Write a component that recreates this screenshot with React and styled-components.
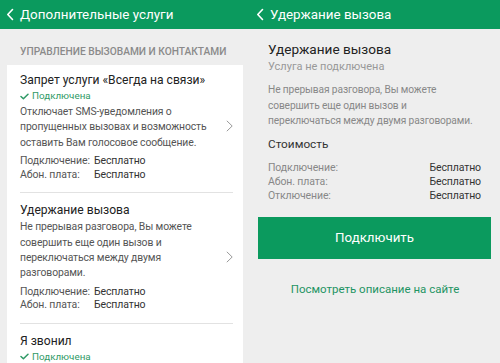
import React from "react";
import styled, { createGlobalStyle } from "styled-components";

const GREEN = "#0b9a5e";

const Global = createGlobalStyle`
  html, body { margin: 0; padding: 0; background: #eeeeee; }
  body { font-family: Roboto, "Liberation Sans", sans-serif; }
`;

const Screen = styled.div`
  display: flex;
  width: 500px;
  height: 363px;
  overflow: hidden;
  background: #eeeeee;
`;

const Panel = styled.div`
  width: 250px;
  flex: none;
  display: flex;
  flex-direction: column;
  min-height: 0;
`;

const Header = styled.div`
  height: 29px;
  flex: none;
  background: ${GREEN};
  color: #fff;
  display: flex;
  align-items: center;
  gap: 6px;
  padding-left: 6px;
  font-size: 13.4px;
`;

const SectionTitle = styled.div`
  padding: 16px 20px 7px;
  font-size: 10.2px;
  line-height: 13px;
  font-weight: 500;
  color: #8a8a8a;
  text-transform: uppercase;
  white-space: nowrap;
`;

const Card = styled.div`
  background: #fff;
  margin: 0 7px;
  padding: 0 10px 0 13px;
`;

const Item = styled.div`
  display: flex;
  align-items: center;
  padding: ${(p) => (p.$first ? "6px" : "8px")} 0 11px;
  border-bottom: ${(p) => (p.$last ? "none" : "1px solid #e2e2e2")};
`;

const ItemBody = styled.div`
  flex: 1;
  min-width: 0;
`;

const ItemTitle = styled.div`
  font-size: 12.1px;
  line-height: 18px;
  color: #222;
`;

const Status = styled.div`
  display: flex;
  align-items: center;
  gap: 3px;
  font-size: 9.8px;
  line-height: 14px;
  color: #2f9a66;
`;

const Desc = styled.div`
  margin-top: ${(p) => p.$mt || 0}px;
  font-size: 10.4px;
  letter-spacing: -0.12px;
  line-height: 15.4px;
  color: #555;
  white-space: nowrap;
`;

const Prices = styled.div`
  margin-top: 4px;
  display: grid;
  grid-template-columns: 74px auto;
  font-size: 10.5px;
  letter-spacing: -0.12px;
  line-height: 13.5px;
  color: #555;
`;

const PriceValue = styled.span`
  color: #333;
`;

const Chevron = styled.svg`
  flex: none;
  width: 7px;
  height: 12px;
`;

const Content = styled.div`
  padding: 11px 19px 0 18px;
  display: flex;
  flex-direction: column;
`;

const DetailTitle = styled.div`
  font-size: 13.6px;
  line-height: 19px;
  color: #222;
`;

const DetailSub = styled.div`
  font-size: 11px;
  line-height: 15px;
  color: #999;
`;

const DetailDesc = styled.div`
  margin-top: 8px;
  font-size: 10.2px;
  letter-spacing: -0.12px;
  line-height: 15.6px;
  color: #888;
  white-space: nowrap;
`;

const CostTitle = styled.div`
  margin-top: 7px;
  font-size: 11.8px;
  line-height: 17px;
  color: #333;
`;

const CostTable = styled.div`
  margin-top: 8px;
  display: grid;
  grid-template-columns: 1fr auto;
  font-size: 10.5px;
  letter-spacing: -0.12px;
  line-height: 14px;
  color: #888;
`;

const CostValue = styled.span`
  color: #333;
  text-align: right;
`;

const Button = styled.button`
  margin: 14px 9px 0 8px;
  height: 42px;
  border: none;
  background: ${GREEN};
  color: #fff;
  font-family: inherit;
  font-size: 13.3px;
  padding: 0;
`;

const Link = styled.div`
  margin-top: 22px;
  text-align: center;
  font-size: 11.5px;
  line-height: 16px;
  color: #1e9463;
`;

const BackIcon = () => (
  <svg width="8" height="13" viewBox="0 0 8 13">
    <path d="M6.5 1.5 L1.8 6.5 L6.5 11.5" fill="none" stroke="#fff" strokeWidth="1.6" strokeLinecap="round" strokeLinejoin="round" />
  </svg>
);

const Check = () => (
  <svg width="9" height="7" viewBox="0 0 9 7">
    <path d="M1 3.5 L3.4 5.8 L8 1.2" fill="none" stroke="#2f9a66" strokeWidth="1.5" strokeLinecap="round" strokeLinejoin="round" />
  </svg>
);

const Arrow = () => (
  <Chevron viewBox="0 0 7 12">
    <path d="M0.8 0.8 L6.2 6 L0.8 11.2" fill="none" stroke="#9a9a9a" strokeWidth="1" />
  </Chevron>
);

export default function App() {
  return (
    <>
      <Global />
      <Screen>
        <Panel>
          <Header>
            <BackIcon />
            Дополнительные услуги
          </Header>
          <SectionTitle>Управление вызовами и контактами</SectionTitle>
          <Card>
            <Item $first>
              <ItemBody>
                <ItemTitle>Запрет услуги «Всегда на связи»</ItemTitle>
                <Status>
                  <Check />
                  Подключена
                </Status>
                <Desc $mt={1}>
                  Отключает SMS-уведомления о<br />
                  пропущенных вызовах и возможность<br />
                  оставить Вам голосовое сообщение.
                </Desc>
                <Prices>
                  <span>Подключение:</span>
                  <PriceValue>Бесплатно</PriceValue>
                  <span>Абон. плата:</span>
                  <PriceValue>Бесплатно</PriceValue>
                </Prices>
              </ItemBody>
              <Arrow />
            </Item>
            <Item>
              <ItemBody>
                <ItemTitle>Удержание вызова</ItemTitle>
                <Desc>
                  Не прерывая разговора, Вы можете<br />
                  совершить еще один вызов и<br />
                  переключаться между двумя<br />
                  разговорами.
                </Desc>
                <Prices>
                  <span>Подключение:</span>
                  <PriceValue>Бесплатно</PriceValue>
                  <span>Абон. плата:</span>
                  <PriceValue>Бесплатно</PriceValue>
                </Prices>
              </ItemBody>
              <Arrow />
            </Item>
            <Item $last>
              <ItemBody>
                <ItemTitle>Я звонил</ItemTitle>
                <Status>
                  <Check />
                  Подключена
                </Status>
              </ItemBody>
            </Item>
          </Card>
        </Panel>
        <Panel>
          <Header>
            <BackIcon />
            Удержание вызова
          </Header>
          <Content>
            <DetailTitle>Удержание вызова</DetailTitle>
            <DetailSub>Услуга не подключена</DetailSub>
            <DetailDesc>
              Не прерывая разговора, Вы можете<br />
              совершить еще один вызов и<br />
              переключаться между двумя разговорами.
            </DetailDesc>
            <CostTitle>Стоимость</CostTitle>
            <CostTable>
              <span>Подключение:</span>
              <CostValue>Бесплатно</CostValue>
              <span>Абон. плата:</span>
              <CostValue>Бесплатно</CostValue>
              <span>Отключение:</span>
              <CostValue>Бесплатно</CostValue>
            </CostTable>
          </Content>
          <Button>Подключить</Button>
          <Link>Посмотреть описание на сайте</Link>
        </Panel>
      </Screen>
    </>
  );
}
